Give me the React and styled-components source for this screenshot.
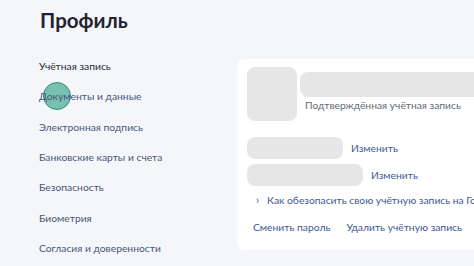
import React from "react";
import styled, { createGlobalStyle } from "styled-components";

const Global = createGlobalStyle`
  html, body { margin: 0; padding: 0; }
  body {
    background: #f4f6fa;
    font-family: Lato, "Noto Sans", sans-serif;
    width: 474px;
    height: 266px;
    overflow: hidden;
  }
`;

const Page = styled.div`
  display: grid;
  grid-template-columns: 237px 300px;
  width: 474px;
  height: 266px;
  overflow: hidden;
`;

const Sidebar = styled.aside`
  display: flex;
  flex-direction: column;
  padding: 7px 0 0 39px;
`;

const Title = styled.h1`
  margin: 0 0 0 1px;
  font-size: 20.5px;
  line-height: 26px;
  font-weight: 700;
  color: #1f2430;
`;

const Nav = styled.nav`
  display: flex;
  flex-direction: column;
  margin-top: 18px;
`;

const NavItem = styled.div`
  position: relative;
  height: 30.33px;
  display: flex;
  align-items: center;
  font-size: 10.3px;
  color: ${(p) => (p.$active ? "#2b2f3a" : "#4a5677")};
`;

const Label = styled.span`
  position: relative;
`;

const Touch = styled.span`
  position: absolute;
  left: 4px;
  top: 1px;
  width: 26px;
  height: 26px;
  border-radius: 50%;
  background: rgba(72, 170, 150, 0.72);
  border: 1.5px solid #2f8f7e;
`;

const Main = styled.main`
  padding-top: 59px;
`;

const Card = styled.section`
  background: #ffffff;
  border-radius: 8px;
  height: 191px;
  padding: 8px 0 0 10px;
  box-sizing: border-box;
  display: flex;
  flex-direction: column;
`;

const Head = styled.div`
  display: flex;
  gap: 3px;
`;

const Avatar = styled.div`
  width: 50px;
  height: 54px;
  border-radius: 8px;
  background: #e6e6e6;
  flex-shrink: 0;
`;

const HeadInfo = styled.div`
  display: flex;
  flex-direction: column;
  padding-top: 5px;
  flex: 1;
`;

const Skeleton = styled.div`
  height: ${(p) => p.$h}px;
  width: ${(p) => p.$w}px;
  border-radius: 8px;
  background: #e6e6e6;
  flex-shrink: 0;
`;

const Caption = styled.div`
  font-size: 10.3px;
  color: #666b73;
  margin: 1px 0 0 5px;
  line-height: 14px;
`;

const Rows = styled.div`
  display: flex;
  flex-direction: column;
  gap: 5px;
  margin-top: 16px;
`;

const Row = styled.div`
  display: flex;
  align-items: center;
  gap: 8px;
`;

const Link = styled.span`
  font-size: 10.3px;
  color: #3e5a92;
  white-space: nowrap;
`;

const Hint = styled.div`
  display: flex;
  align-items: center;
  gap: 8px;
  margin: 7px 0 0 9px;
  white-space: nowrap;
`;

const Chevron = styled.span`
  font-size: 11px;
  color: #3e5a92;
`;

const Actions = styled.div`
  display: flex;
  gap: 16px;
  margin: 15px 0 0 6px;
`;

const nav = [
  "Учётная запись",
  "Документы и данные",
  "Электронная подпись",
  "Банковские карты и счета",
  "Безопасность",
  "Биометрия",
  "Согласия и доверенности",
];

export default function App() {
  return (
    <>
      <Global />
      <Page>
        <Sidebar>
          <Title>Профиль</Title>
          <Nav>
            {nav.map((n, i) => (
              <NavItem key={n} $active={i === 0}>
                {i === 1 && <Touch />}
                <Label>{n}</Label>
              </NavItem>
            ))}
          </Nav>
        </Sidebar>
        <Main>
          <Card>
            <Head>
              <Avatar />
              <HeadInfo>
                <Skeleton $w={240} $h={25} />
                <Caption>Подтверждённая учётная запись</Caption>
              </HeadInfo>
            </Head>
            <Rows>
              <Row>
                <Skeleton $w={96} $h={22} />
                <Link>Изменить</Link>
              </Row>
              <Row>
                <Skeleton $w={116} $h={22} />
                <Link>Изменить</Link>
              </Row>
            </Rows>
            <Hint>
              <Chevron>›</Chevron>
              <Link>Как обезопасить свою учётную запись на Госуслугах</Link>
            </Hint>
            <Actions>
              <Link>Сменить пароль</Link>
              <Link>Удалить учётную запись</Link>
            </Actions>
          </Card>
        </Main>
      </Page>
    </>
  );
}
